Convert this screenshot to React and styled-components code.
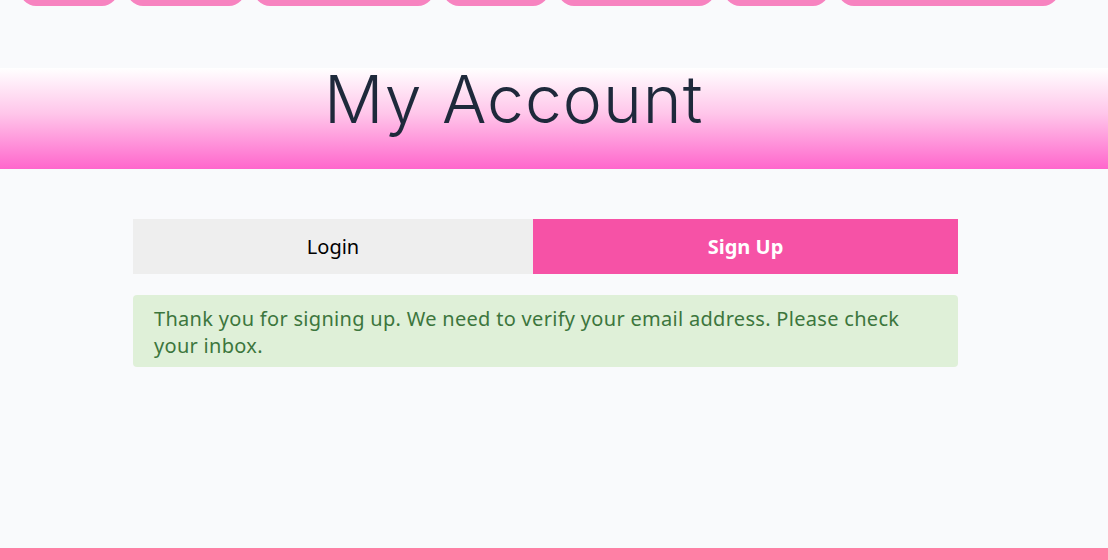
import styled, { createGlobalStyle } from "styled-components";

const Global = createGlobalStyle`
  body {
    margin: 0;
    background: #f9fafc;
    font-family: "Noto Sans", "Open Sans", sans-serif;
  }
`;

const Page = styled.div`
  min-height: 560px;
  display: flex;
  flex-direction: column;
  overflow: hidden;
`;

const Nav = styled.nav`
  display: flex;
  gap: 9px;
  padding-left: 20px;
  margin-top: -30px;
`;

const Pill = styled.a`
  display: block;
  width: ${({w}) => w}px;
  height: 36px;
  border-radius: 16px;
  background: #f783c0;
`;

const Banner = styled.header`
  margin-top: 62px;
  height: 101px;
  background: linear-gradient(to bottom, #ffffff 0%, #ffc6ea 45%, #ff66cc 100%);
  display: flex;
  align-items: center;
`;

const Title = styled.h1`
  margin: 0 0 0 324px;
  font-family: "Inter", "Lato", sans-serif;
  font-weight: 300;
  font-size: 66px;
  color: #1e293b;
  letter-spacing: 1px;
  line-height: 1;
  position: relative;
  top: -20px;
`;

const Content = styled.main`
  width: 825px;
  margin: 50px 0 0 133px;
`;

const Tabs = styled.div`
  display: grid;
  grid-template-columns: 400px 425px;
  height: 55px;
`;

const Tab = styled.button`
  border: none;
  margin: 0;
  font-family: inherit;
  font-size: 20px;
  font-weight: ${({active}) => (active ? 700 : 400)};
  color: ${({active}) => (active ? "#ffffff" : "#000000")};
  background: ${({active}) => (active ? "#f652a6" : "#eeeeee")};
  cursor: pointer;
`;

const Alert = styled.div`
  margin-top: 21px;
  background: #dff0d8;
  color: #3c763d;
  border-radius: 4px;
  padding: 10px 40px 8px 21px;
  font-size: 20px;
  letter-spacing: 0.3px;
  line-height: 27px;
`;

const Footer = styled.footer`
  margin-top: auto;
  height: 12px;
  background: #fe80a5;
`;

const pills = [98, 118, 180, 106, 157, 105, 221];

export default function App() {
  return (
    <Page>
      <Global />
      <Nav>
        {pills.map((w, i) => (
          <Pill key={i} w={w} />
        ))}
      </Nav>
      <Banner>
        <Title>My Account</Title>
      </Banner>
      <Content>
        <Tabs>
          <Tab>Login</Tab>
          <Tab active>Sign Up</Tab>
        </Tabs>
        <Alert>
          Thank you for signing up. We need to verify your email address. Please check your inbox.
        </Alert>
      </Content>
      <Footer />
    </Page>
  );
}
